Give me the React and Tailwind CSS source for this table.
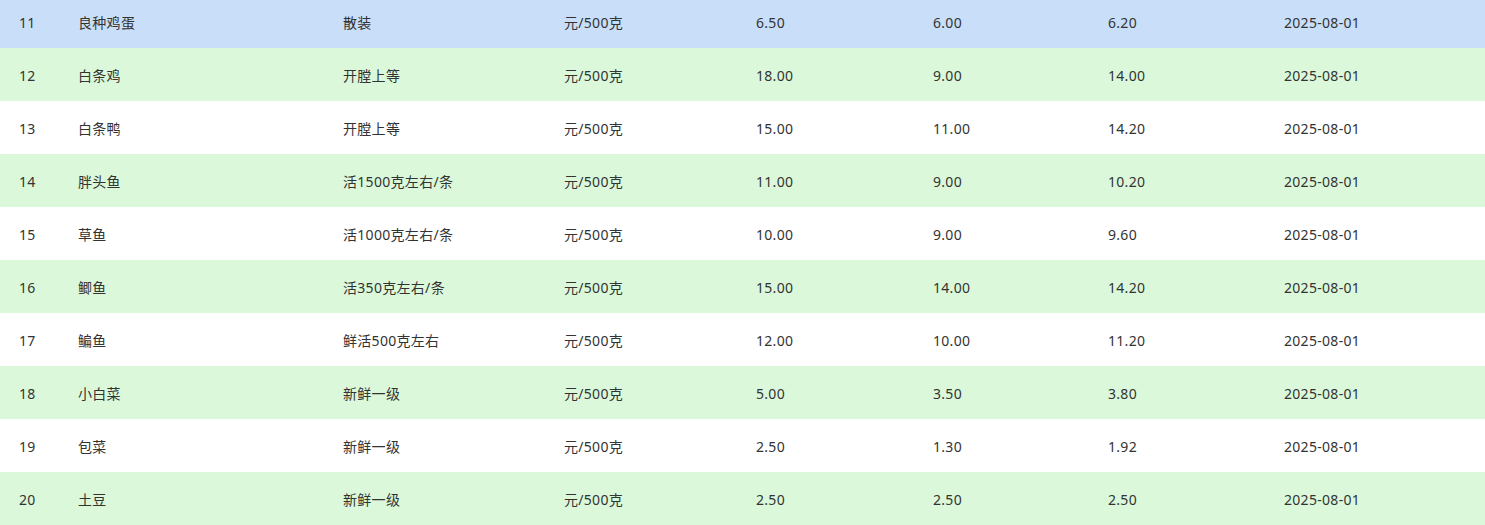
const rows = [
  ["11", "良种鸡蛋", "散装", "元/500克", "6.50", "6.00", "6.20", "2025-08-01"],
  ["12", "白条鸡", "开膛上等", "元/500克", "18.00", "9.00", "14.00", "2025-08-01"],
  ["13", "白条鸭", "开膛上等", "元/500克", "15.00", "11.00", "14.20", "2025-08-01"],
  ["14", "胖头鱼", "活1500克左右/条", "元/500克", "11.00", "9.00", "10.20", "2025-08-01"],
  ["15", "草鱼", "活1000克左右/条", "元/500克", "10.00", "9.00", "9.60", "2025-08-01"],
  ["16", "鲫鱼", "活350克左右/条", "元/500克", "15.00", "14.00", "14.20", "2025-08-01"],
  ["17", "鳊鱼", "鲜活500克左右", "元/500克", "12.00", "10.00", "11.20", "2025-08-01"],
  ["18", "小白菜", "新鲜一级", "元/500克", "5.00", "3.50", "3.80", "2025-08-01"],
  ["19", "包菜", "新鲜一级", "元/500克", "2.50", "1.30", "1.92", "2025-08-01"],
  ["20", "土豆", "新鲜一级", "元/500克", "2.50", "2.50", "2.50", "2025-08-01"],
];

export default function App() {
  return (
    <div
      className="w-[1485px] h-[525px] overflow-hidden bg-white text-[14px] tracking-[0.3px] text-[#333333]"
      style={{ fontFamily: '"Noto Sans", "Noto Sans CJK SC", sans-serif' }}
    >
      <div className="-mt-[5px]">
        {rows.map((r, i) => (
          <div
            key={r[0]}
            className={
              "grid grid-cols-[59px_265px_221px_192px_177px_175px_176px_1fr] items-center h-[53px] pl-[19px] pt-[2px] " +
              (i === 0 ? "bg-[#c9dff9]" : i % 2 === 1 ? "bg-[#dbf9da]" : "bg-white")
            }
          >
            {r.map((c, j) => (
              <div key={j} className="whitespace-nowrap">
                {c}
              </div>
            ))}
          </div>
        ))}
      </div>
    </div>
  );
}
